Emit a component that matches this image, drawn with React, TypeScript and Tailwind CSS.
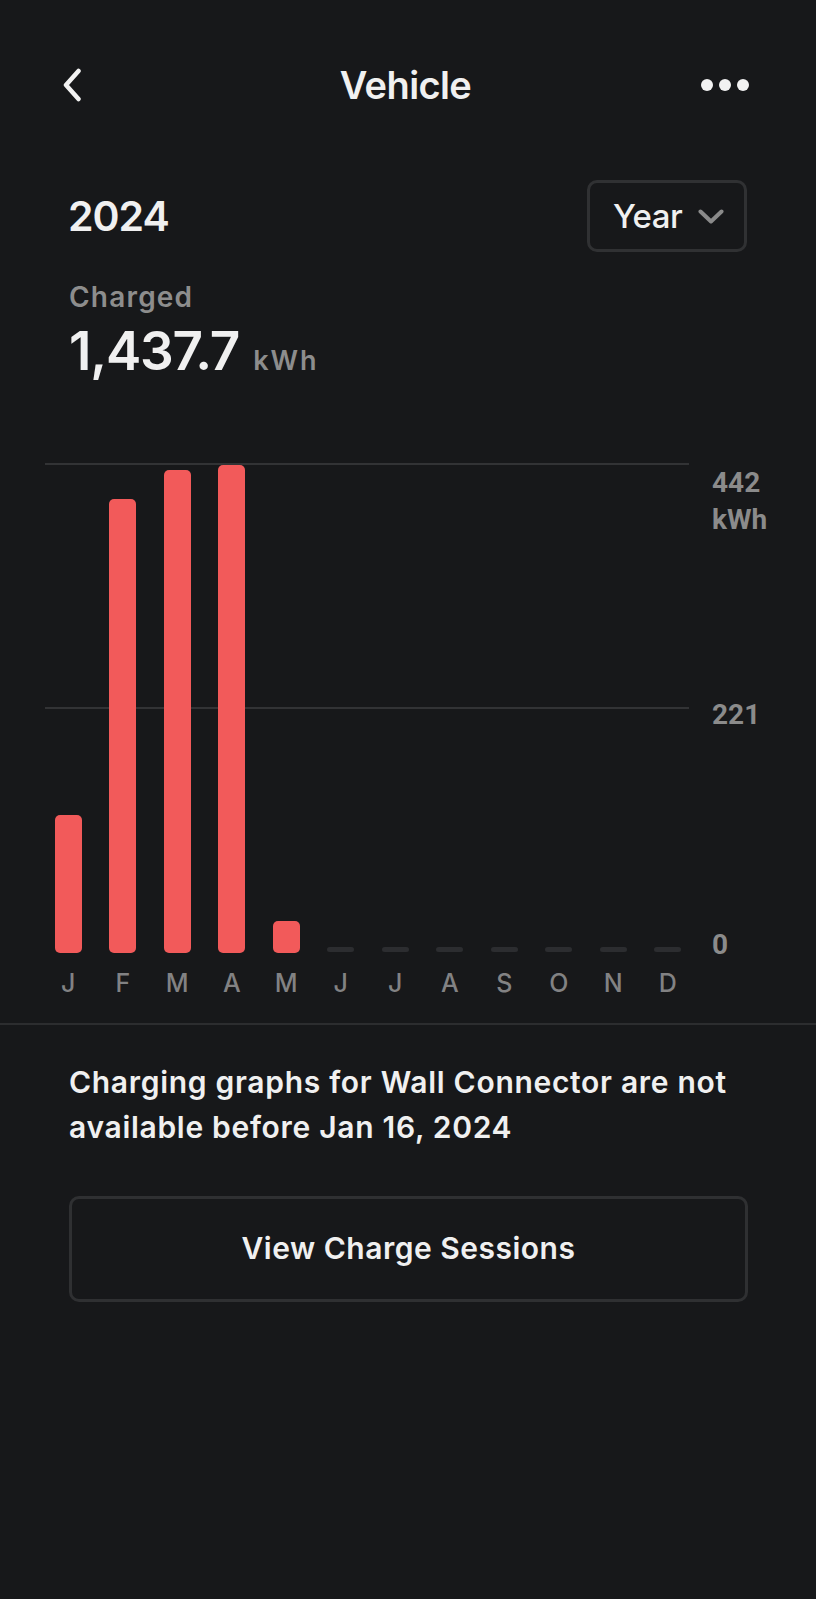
import React from "react";

const months = ["J", "F", "M", "A", "M", "J", "J", "A", "S", "O", "N", "D"];
const usage = [124.3, 409, 435.6, 440, 28.8, 0, 0, 0, 0, 0, 0, 0];
const MAX_KWH = 442;
const PLOT_H = 490;

function BackChevron() {
  return (
    <svg width="20" height="34" viewBox="0 0 20 34" fill="none">
      <path d="M16.5 3 L4 17 L16.5 31" stroke="#f2f2f2" strokeWidth="4.5" strokeLinecap="round" strokeLinejoin="round" />
    </svg>
  );
}

function DownChevron() {
  return (
    <svg width="26" height="15" viewBox="0 0 26 15" fill="none">
      <path d="M2.5 2.5 L13 12.5 L23.5 2.5" stroke="#8a8a8a" strokeWidth="4" strokeLinecap="round" strokeLinejoin="round" />
    </svg>
  );
}

function Chart() {
  return (
    <div>
      <div className="relative ml-[41px] h-[490px] w-[654px]">
        {/* grid lines, behind the bars */}
        <div className="absolute left-[4px] right-[6px] top-0 h-[2px] bg-[#323335]" />
        <div className="absolute left-[4px] right-[6px] top-[244px] h-[2px] bg-[#323335]" />

        <div className="relative flex h-full items-end">
          {usage.map((v, i) => (
            <div key={i} className="flex flex-1 justify-center">
              {v > 0 ? (
                <div
                  className="w-[27px] rounded-[5px] bg-[#f25a5a]"
                  style={{ height: `${(v / MAX_KWH) * PLOT_H}px` }}
                />
              ) : (
                <div className="mb-[1px] h-[5px] w-[27px] rounded-full bg-[#2c2d30]" />
              )}
            </div>
          ))}
        </div>

        {/* y axis */}
        <div className="absolute left-[671px] top-[1px] font-['Roboto',sans-serif] text-[28px] font-bold leading-[37px] text-[#8b8b8b]">
          442
          <br />
          kWh
        </div>
        <div className="absolute left-[671px] top-[233px] font-['Roboto',sans-serif] text-[28px] font-bold leading-[37px] text-[#8b8b8b]">
          221
        </div>
        <div className="absolute left-[671px] top-[463px] font-['Roboto',sans-serif] text-[28px] font-bold leading-[37px] text-[#8b8b8b]">
          0
        </div>
      </div>

      <div className="ml-[41px] mt-[15px] flex w-[654px]">
        {months.map((m, i) => (
          <div key={i} className="flex-1 text-center text-[25px] font-medium leading-[30px] text-[#828283]">
            {m}
          </div>
        ))}
      </div>
    </div>
  );
}

export default function App() {
  return (
    <div className="min-h-[1599px] w-full bg-[#17181a] pt-[58px] font-['Inter',sans-serif] text-[#f0f0f0]">
      {/* header */}
      <div className="grid h-[54px] grid-cols-[1fr_auto_1fr] items-center pl-[62px] pr-[67px]">
        <div className="flex items-center">
          <BackChevron />
        </div>
        <div className="text-[38px] font-semibold leading-none tracking-[-0.6px]">Vehicle</div>
        <div className="flex items-center justify-end gap-[6px]">
          <span className="h-[12px] w-[12px] rounded-full bg-[#f2f2f2]" />
          <span className="h-[12px] w-[12px] rounded-full bg-[#f2f2f2]" />
          <span className="h-[12px] w-[12px] rounded-full bg-[#f2f2f2]" />
        </div>
      </div>

      {/* period row */}
      <div className="mt-[68px] flex items-center justify-between pl-[68px] pr-[69px]">
        <div className="text-[41px] font-semibold leading-none tracking-[-1px]">2024</div>
        <button className="flex h-[72px] w-[160px] items-center gap-[16px] rounded-[10px] border-[3px] border-[#303133] pl-[23px]">
          <span className="text-[33px] font-medium leading-none tracking-[-0.5px]">Year</span>
          <DownChevron />
        </button>
      </div>

      {/* total */}
      <div className="mt-[29px] pl-[69px]">
        <div className="text-[28px] font-semibold leading-[32px] tracking-[1.2px] text-[#8d8d8d]">Charged</div>
        <div className="mt-[12px] flex items-baseline gap-[14px]">
          <span className="text-[53px] font-semibold leading-[53px] tracking-[-1.2px]">1,437.7</span>
          <span className="text-[27px] font-semibold tracking-[2px] text-[#8d8d8d]">kWh</span>
        </div>
      </div>

      <div className="mt-[81px]">
        <Chart />
      </div>

      <div className="mt-[25px] h-[2px] w-full bg-[#2c2d2f]" />

      <p className="mt-[35px] pl-[69px] pr-[40px] text-[30px] font-semibold leading-[45px] tracking-[0.7px]">
        Charging graphs for Wall Connector are not available before Jan 16, 2024
      </p>

      <div className="mt-[46px] pl-[69px] pr-[68px]">
        <button className="flex h-[106px] w-full items-center justify-center rounded-[10px] border-[3px] border-[#2f3032] text-[30px] font-semibold tracking-[0.5px]">
          View Charge Sessions
        </button>
      </div>
    </div>
  );
}
